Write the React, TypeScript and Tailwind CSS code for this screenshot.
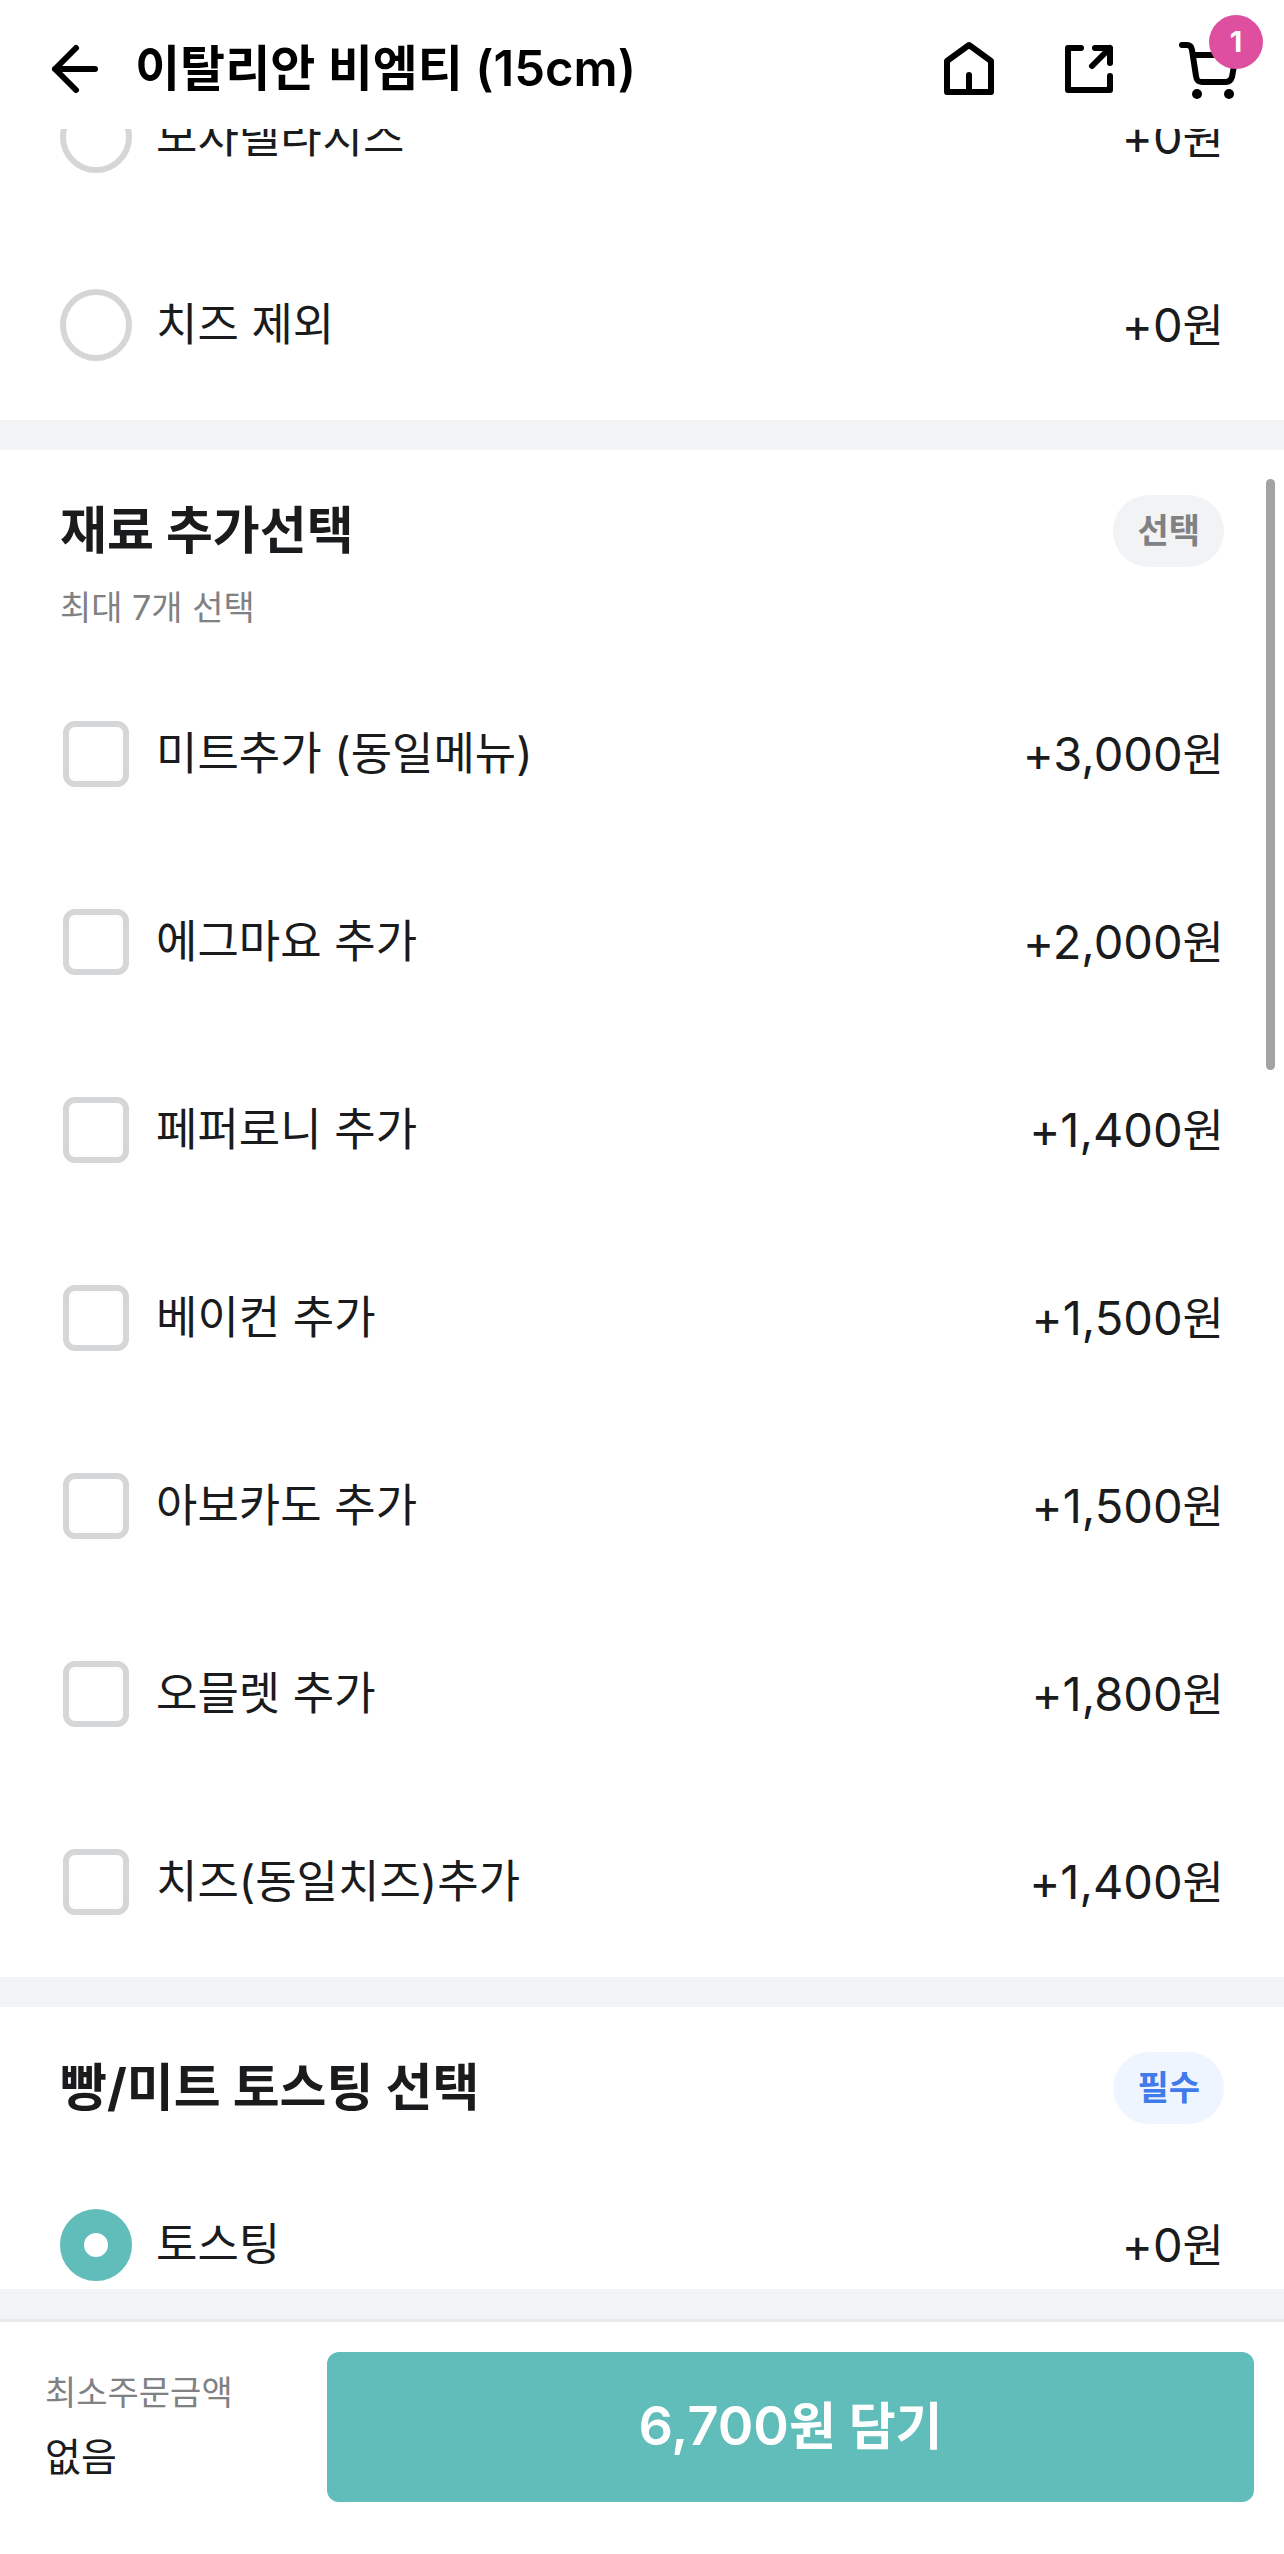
import React, { useState } from "react";

interface Option {
  id: string;
  name: string;
  price: number;
}

interface OptionRowProps {
  option: Option;
  type: "radio" | "checkbox";
  group: string;
  checked: boolean;
  onChange: () => void;
}

const BASE_PRICE = 6700;

const cheeseOptions: Option[] = [
  { id: "mozzarella", name: "모차렐라치즈", price: 0 },
  { id: "no-cheese", name: "치즈 제외", price: 0 },
];

const extraOptions: Option[] = [
  { id: "meat", name: "미트추가 (동일메뉴)", price: 3000 },
  { id: "egg-mayo", name: "에그마요 추가", price: 2000 },
  { id: "pepperoni", name: "페퍼로니 추가", price: 1400 },
  { id: "bacon", name: "베이컨 추가", price: 1500 },
  { id: "avocado", name: "아보카도 추가", price: 1500 },
  { id: "omelet", name: "오믈렛 추가", price: 1800 },
  { id: "cheese", name: "치즈(동일치즈)추가", price: 1400 },
];

const toastingOptions: Option[] = [{ id: "toasting", name: "토스팅", price: 0 }];

const won = (value: number) => value.toLocaleString("en-US");

const OptionRow: React.FC<OptionRowProps> = ({ option, type, group, checked, onChange }) => (
  <label className="flex h-[188px] cursor-pointer items-center gap-6 px-[60px] text-[45px] leading-[60px]">
    <span className="flex w-[72px] shrink-0 justify-center">
      {type === "radio" ? (
        <input
          type="radio"
          name={group}
          checked={checked}
          onChange={onChange}
          className="size-[72px] appearance-none rounded-full border-[6px] border-[#d5d6d8] bg-white checked:border-[24px] checked:border-[#60bdba]"
        />
      ) : (
        <input
          type="checkbox"
          name={group}
          checked={checked}
          onChange={onChange}
          className="size-[66px] appearance-none rounded-xl border-[6px] border-[#d5d6d8] bg-white checked:border-[#60bdba] checked:bg-[#60bdba]"
        />
      )}
    </span>
    <span className="flex-1">{option.name}</span>
    <span>
      <span className="text-[47px]">+{won(option.price)}</span>원
    </span>
  </label>
);

const SectionHeader: React.FC<{ title: string; hint?: string; required?: boolean }> = ({
  title,
  hint,
  required = false,
}) => (
  <div className="px-[60px] pt-[45px] pb-[27px]">
    <div className="flex h-[72px] items-center justify-between">
      <h2 className="text-[51px] leading-[74px] font-bold">{title}</h2>
      <span
        className={`rounded-full px-6 text-[34px] leading-[72px] font-bold ${
          required ? "bg-[#eef5fe] text-[#3f7bea]" : "bg-[#f2f3f5] text-[#808183]"
        }`}
      >
        {required ? "필수" : "선택"}
      </span>
    </div>
    {hint && <p className="mt-4 text-[34px] leading-[50px] text-[#808183]">{hint}</p>}
  </div>
);

const Divider = () => <div className="h-[30px] bg-[#f2f3f5]" />;

const Icon: React.FC<{ children: React.ReactNode }> = ({ children }) => (
  <svg
    viewBox="0 0 72 72"
    className="size-[72px]"
    fill="none"
    stroke="currentColor"
    strokeWidth="6"
    strokeLinecap="round"
    strokeLinejoin="round"
    aria-hidden="true"
  >
    {children}
  </svg>
);

export default function App() {
  const [cheese, setCheese] = useState("");
  const [extras, setExtras] = useState<string[]>([]);
  const [toasting, setToasting] = useState("toasting");

  const toggleExtra = (id: string) => {
    setExtras((prev) => (prev.includes(id) ? prev.filter((item) => item !== id) : [...prev, id]));
  };

  const total = extraOptions
    .filter((option) => extras.includes(option.id))
    .reduce((sum, option) => sum + option.price, BASE_PRICE);

  return (
    <div
      lang="ko"
      className="flex h-screen flex-col bg-white font-['Inter','Noto_Sans_CJK_KR',sans-serif] text-[#1a1b1d]"
    >
      {/* Top bar */}
      <header className="flex items-center justify-between px-[39px] pt-[33px] pb-6 text-black">
        <div className="flex items-center gap-6">
          <button type="button" aria-label="뒤로">
            <Icon>
              <path d="M56 36H16M37 15L16 36l21 21" />
            </Icon>
          </button>
          <h1 className="text-[49px] leading-[72px] font-semibold">이탈리안 비엠티 (15cm)</h1>
        </div>
        <nav className="flex gap-12">
          <button type="button" aria-label="홈">
            <Icon>
              <path d="M36 12L14 28v31h44V28zM36 42v17" />
            </Icon>
          </button>
          <button type="button" aria-label="공유">
            <Icon>
              <path d="M28 15H15v42h42V43M42 15h15v15M57 15L39 33" />
            </Icon>
          </button>
          <button type="button" aria-label="장바구니" className="relative">
            <Icon>
              <path d="M9 12h5c3 0 4.500 1.500 5 5l4 26c.5 4 2 6 6 6h24c3.500 0 5-1.500 6-5l4-22H20" />
              <circle cx="24" cy="61" r="5" fill="currentColor" stroke="none" />
              <circle cx="56" cy="61" r="5" fill="currentColor" stroke="none" />
            </Icon>
            <span className="absolute -top-[18px] -right-[18px] size-[54px] rounded-full bg-[#de4f9f] text-center text-[29px] leading-[54px] font-bold text-white">
              1
            </span>
          </button>
        </nav>
      </header>

      {/* Option list, already scrolled past the top of the cheese group */}
      <main className="relative min-h-0 flex-1 overflow-hidden">
        <section className="-mt-[86px] pb-px">
          {cheeseOptions.map((option) => (
            <OptionRow
              key={option.id}
              option={option}
              type="radio"
              group="cheese"
              checked={cheese === option.id}
              onChange={() => setCheese(option.id)}
            />
          ))}
        </section>
        <Divider />

        <section className="pb-px">
          <SectionHeader title="재료 추가선택" hint="최대 7개 선택" />
          {extraOptions.map((option) => (
            <OptionRow
              key={option.id}
              option={option}
              type="checkbox"
              group="extras"
              checked={extras.includes(option.id)}
              onChange={() => toggleExtra(option.id)}
            />
          ))}
        </section>
        <Divider />

        <section className="pb-px">
          <SectionHeader title="빵/미트 토스팅 선택" required />
          {toastingOptions.map((option) => (
            <OptionRow
              key={option.id}
              option={option}
              type="radio"
              group="toasting"
              checked={toasting === option.id}
              onChange={() => setToasting(option.id)}
            />
          ))}
        </section>

        {/* Scroll indicator */}
        <div className="absolute top-[350px] right-[9px] h-[591px] w-[9px] rounded-full bg-[#a3a3a3]" />
      </main>

      {/* Order bar */}
      <footer>
        <Divider />
        <div className="flex items-center border-t-[3px] border-[#e7e9eb] pt-[30px] pr-[30px] pb-[52px] pl-[45px]">
          <div className="w-[282px] shrink-0 pb-1 leading-[64px]">
            <p className="text-[34px] text-[#808183]">최소주문금액</p>
            <p className="text-[39px]">없음</p>
          </div>
          <button
            type="button"
            className="h-[150px] flex-1 rounded-xl bg-[#60bdba] pb-1 text-[51px] font-semibold text-white"
          >
            <span className="text-[54px]">{won(total)}</span>원 담기
          </button>
        </div>
      </footer>
    </div>
  );
}
